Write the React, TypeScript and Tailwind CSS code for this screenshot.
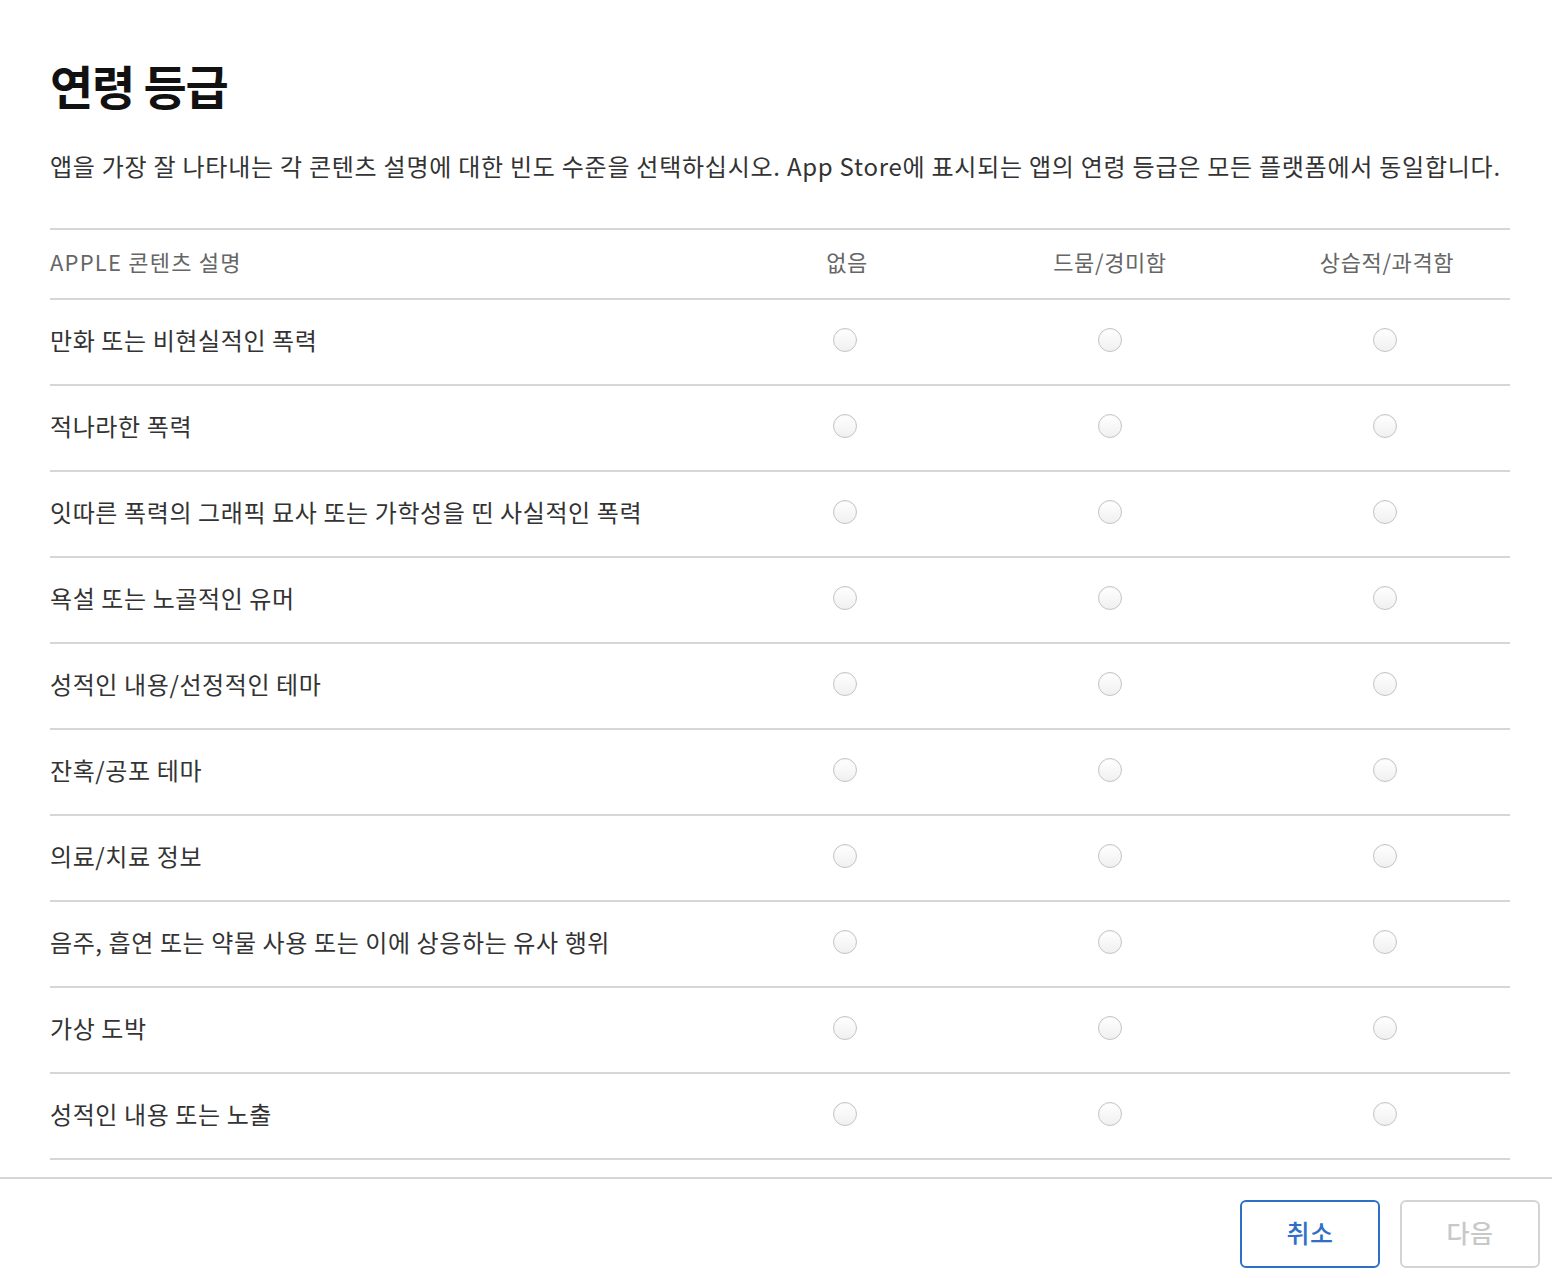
import React from 'react';

const rows = [
  '만화 또는 비현실적인 폭력',
  '적나라한 폭력',
  '잇따른 폭력의 그래픽 묘사 또는 가학성을 띤 사실적인 폭력',
  '욕설 또는 노골적인 유머',
  '성적인 내용/선정적인 테마',
  '잔혹/공포 테마',
  '의료/치료 정보',
  '음주, 흡연 또는 약물 사용 또는 이에 상응하는 유사 행위',
  '가상 도박',
  '성적인 내용 또는 노출',
];

function Radio() {
  return (
    <span className="block h-6 w-6 rounded-full border border-[#c4c4c4] bg-gradient-to-b from-white to-[#f0f0f0] shadow-[inset_0_1px_1px_rgba(0,0,0,0.04)]" />
  );
}

export default function App() {
  return (
    <div className="min-h-[1278px] bg-white text-[#333] font-['Noto_Sans_CJK_KR','Noto_Sans',sans-serif]">
      <div className="px-[50px] pt-[52px]">
        <h1 className="text-[47px] font-bold leading-[66px] text-[#111] tracking-[-1.2px]">연령 등급</h1>
        <p className="mt-[30px] whitespace-nowrap text-[24px] leading-[36px] text-[#333] tracking-[0.75px]">
          앱을 가장 잘 나타내는 각 콘텐츠 설명에 대한 빈도 수준을 선택하십시오. App Store에 표시되는 앱의 연령 등급은 모든 플랫폼에서 동일합니다.
        </p>

        <div className="mt-[44px] w-[1460px] border-t-2 border-[#d6d6d6]">
          <div className="grid h-[70px] grid-cols-[670px_250px_280px_260px] items-center border-b-2 border-[#d6d6d6] pb-[5px] text-[22px] text-[#666] tracking-[0.6px]">
            <div className="tracking-[1.2px]">APPLE 콘텐츠 설명</div>
            <div className="text-center pl-[4px]">없음</div>
            <div className="text-center">드뭄/경미함</div>
            <div className="text-center pl-[14px]">상습적/과격함</div>
          </div>
          {rows.map((label) => (
            <div
              key={label}
              className="grid h-[86px] grid-cols-[670px_250px_280px_260px] items-center border-b-2 border-[#d6d6d6] pb-[4px] text-[24px] text-[#333]"
            >
              <div className="tracking-[0.6px]">{label}</div>
              <div className="flex justify-center">
                <Radio />
              </div>
              <div className="flex justify-center">
                <Radio />
              </div>
              <div className="flex justify-center pl-[10px]">
                <Radio />
              </div>
            </div>
          ))}
        </div>
      </div>

      <div className="mt-[17px] flex justify-end gap-[20px] border-t-2 border-[#d6d6d6] pr-[12px] pt-[21px] pb-[10px]">
        <button
          type="button"
          className="flex h-[68px] w-[140px] items-center justify-center rounded-[6px] border-2 border-[#2f6fc6] pb-[2px] text-[25px] font-medium text-[#2f6fc6] tracking-[0.5px]"
        >
          취소
        </button>
        <button
          type="button"
          className="flex h-[68px] w-[140px] items-center justify-center rounded-[6px] border-2 border-[#d4d4d4] pb-[2px] text-[25px] font-medium text-[#c8c8c8] tracking-[0.5px]"
        >
          다음
        </button>
      </div>
    </div>
  );
}
